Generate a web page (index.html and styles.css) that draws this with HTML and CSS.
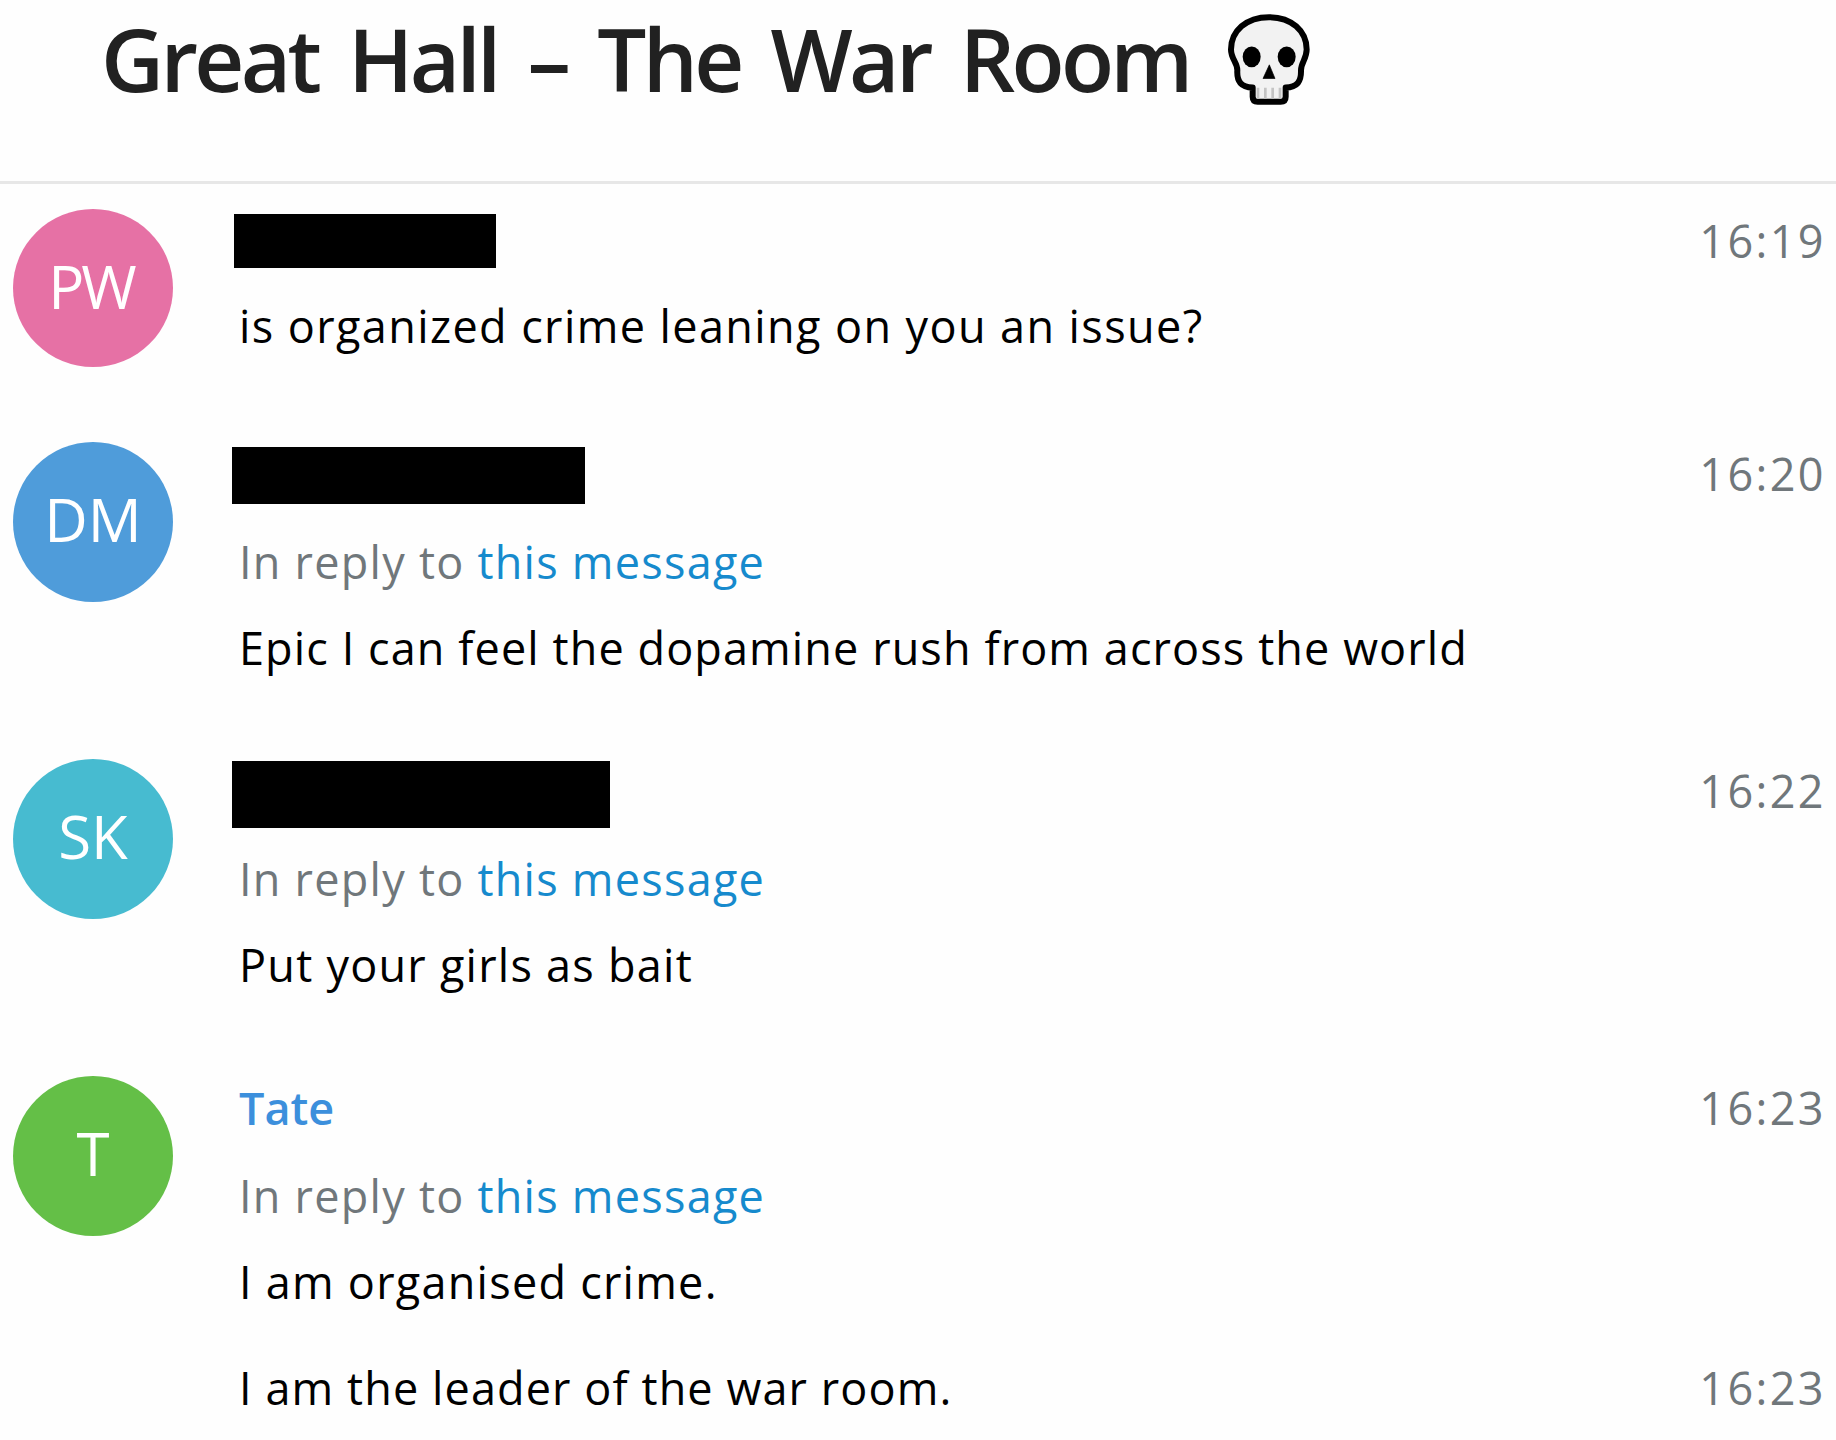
FILE: index.html
```html
<!DOCTYPE html>
<html lang="en">

<head>
    <meta charset="UTF-8">
    <meta name="viewport" content="width=device-width, initial-scale=1.0">
    <title>Great Hall – The War Room</title>
    <link rel="stylesheet" href="styles.css">
</head>

<body>
    <header class="chat-header">
        <h1>Great Hall – The War Room</h1>
        <svg class="skull" viewBox="83 43 246 272" role="img" aria-label="Skull">
            <path d="M206 52C138 52 92 93 92 149C92 177 111 188 111 211C109 245 122 262 157 263V291Q157 306 172 306H241Q256 306 256 291V263C291 262 303 245 302 211C302 188 319 177 319 149C319 93 273 52 206 52Z" fill="#f2f2f2" stroke="#000" stroke-width="18" stroke-linejoin="round" />
            <path d="M173 264V297M195 264V297M217 264V297M239 264V297" stroke="#c4c4c4" stroke-width="8" />
            <ellipse cx="154" cy="171" rx="27" ry="31" />
            <ellipse cx="259" cy="171" rx="27" ry="31" />
            <path d="M207 195L224 236H188Z" stroke="#000" stroke-width="2" stroke-linejoin="round" />
        </svg>
    </header>

    <main class="history">
        <div class="message">
            <div class="avatar pink">PW</div>
            <div class="body">
                <div class="head">
                    <span class="redacted first"></span>
                    <span class="time">16:19</span>
                </div>
                <div class="text loose">is organized crime leaning on you an issue?</div>
            </div>
        </div>

        <div class="message">
            <div class="avatar blue">DM</div>
            <div class="body">
                <div class="head">
                    <span class="redacted second"></span>
                    <span class="time">16:20</span>
                </div>
                <div class="reply">In reply to <a href="#">this message</a></div>
                <div class="text tight">Epic I can feel the dopamine rush from across the world</div>
            </div>
        </div>

        <div class="message">
            <div class="avatar teal">SK</div>
            <div class="body">
                <div class="head">
                    <span class="redacted third"></span>
                    <span class="time">16:22</span>
                </div>
                <div class="reply">In reply to <a href="#">this message</a></div>
                <div class="text">Put your girls as bait</div>
            </div>
        </div>

        <div class="message">
            <div class="avatar green">T</div>
            <div class="body">
                <div class="head">
                    <span class="name">Tate</span>
                    <span class="time">16:23</span>
                </div>
                <div class="reply">In reply to <a href="#">this message</a></div>
                <div class="text">I am organised crime.</div>
            </div>
        </div>

        <div class="message joined">
            <div class="body">
                <div class="head">
                    <span class="text tight">I am the leader of the war room.</span>
                    <span class="time">16:23</span>
                </div>
            </div>
        </div>
    </main>
</body>

</html>
```
FILE: styles.css
```css
* {
    box-sizing: border-box;
}

body {
    margin: 0;
    height: 1440px;
    overflow: hidden;
    background: #fefefe;
    color: #000;
    font-family: "Open Sans", "Noto Sans", sans-serif;
    font-size: 45px;
    line-height: 63px;
    letter-spacing: 1.25px;
}

.chat-header {
    display: flex;
    align-items: flex-start;
    height: 184px;
    padding-left: 101px;
    border-bottom: 3px solid #e7e7e7;
}

.chat-header h1 {
    width: 1127px;
    margin: 0;
    color: #212121;
    font-size: 87px;
    font-weight: 600;
    line-height: 117px;
    letter-spacing: -3.7px;
    word-spacing: 11px;
    white-space: nowrap;
}

.skull {
    width: 82px;
    height: 91px;
    margin-top: 14px;
}

.history {
    padding-top: 25px;
}

.message {
    display: flex;
    gap: 66px;
    padding: 0 10px 0 13px;
    margin-bottom: 80px;
}

.message:first-child {
    margin-bottom: 75px;
}

.message:nth-child(4) {
    margin-bottom: 43px;
}

.avatar {
    flex: none;
    width: 160px;
    height: 160px;
    border-radius: 50%;
    color: #fff;
    font-size: 60px;
    line-height: 155px;
    letter-spacing: 0;
    text-align: center;
}

.message:first-child .avatar {
    height: 158px;
    line-height: 154px;
    letter-spacing: -3px;
    padding-right: 4px;
}

.pink {
    background: #e671a5;
}

.blue {
    background: #4f9cda;
}

.teal {
    background: #47bbd0;
}

.green {
    background: #64bf47;
}

.body {
    flex: 1;
}

.joined .body {
    margin-left: 226px;
}

.head {
    display: flex;
    justify-content: space-between;
    height: 61px;
}

.name {
    color: #3c8fdc;
    font-weight: 600;
    letter-spacing: 0;
}

.time {
    margin-left: auto;
    color: #70777b;
    letter-spacing: 2.4px;
}

.redacted {
    margin: 5px 0 0 -7px;
    background: #000;
}

.first {
    width: 262px;
    height: 54px;
    margin-left: -5px;
}

.second {
    width: 353px;
    height: 57px;
}

.third {
    width: 378px;
    height: 67px;
    margin-top: 2px;
}

.reply {
    margin-top: 27px;
    color: #70777b;
}

.reply a {
    color: #168acd;
    text-decoration: none;
}

.reply + .text {
    margin-top: 23px;
}

.head + .text {
    margin-top: 24px;
}

.loose {
    letter-spacing: 1.4px;
}

.tight {
    letter-spacing: 1.1px;
}
```
